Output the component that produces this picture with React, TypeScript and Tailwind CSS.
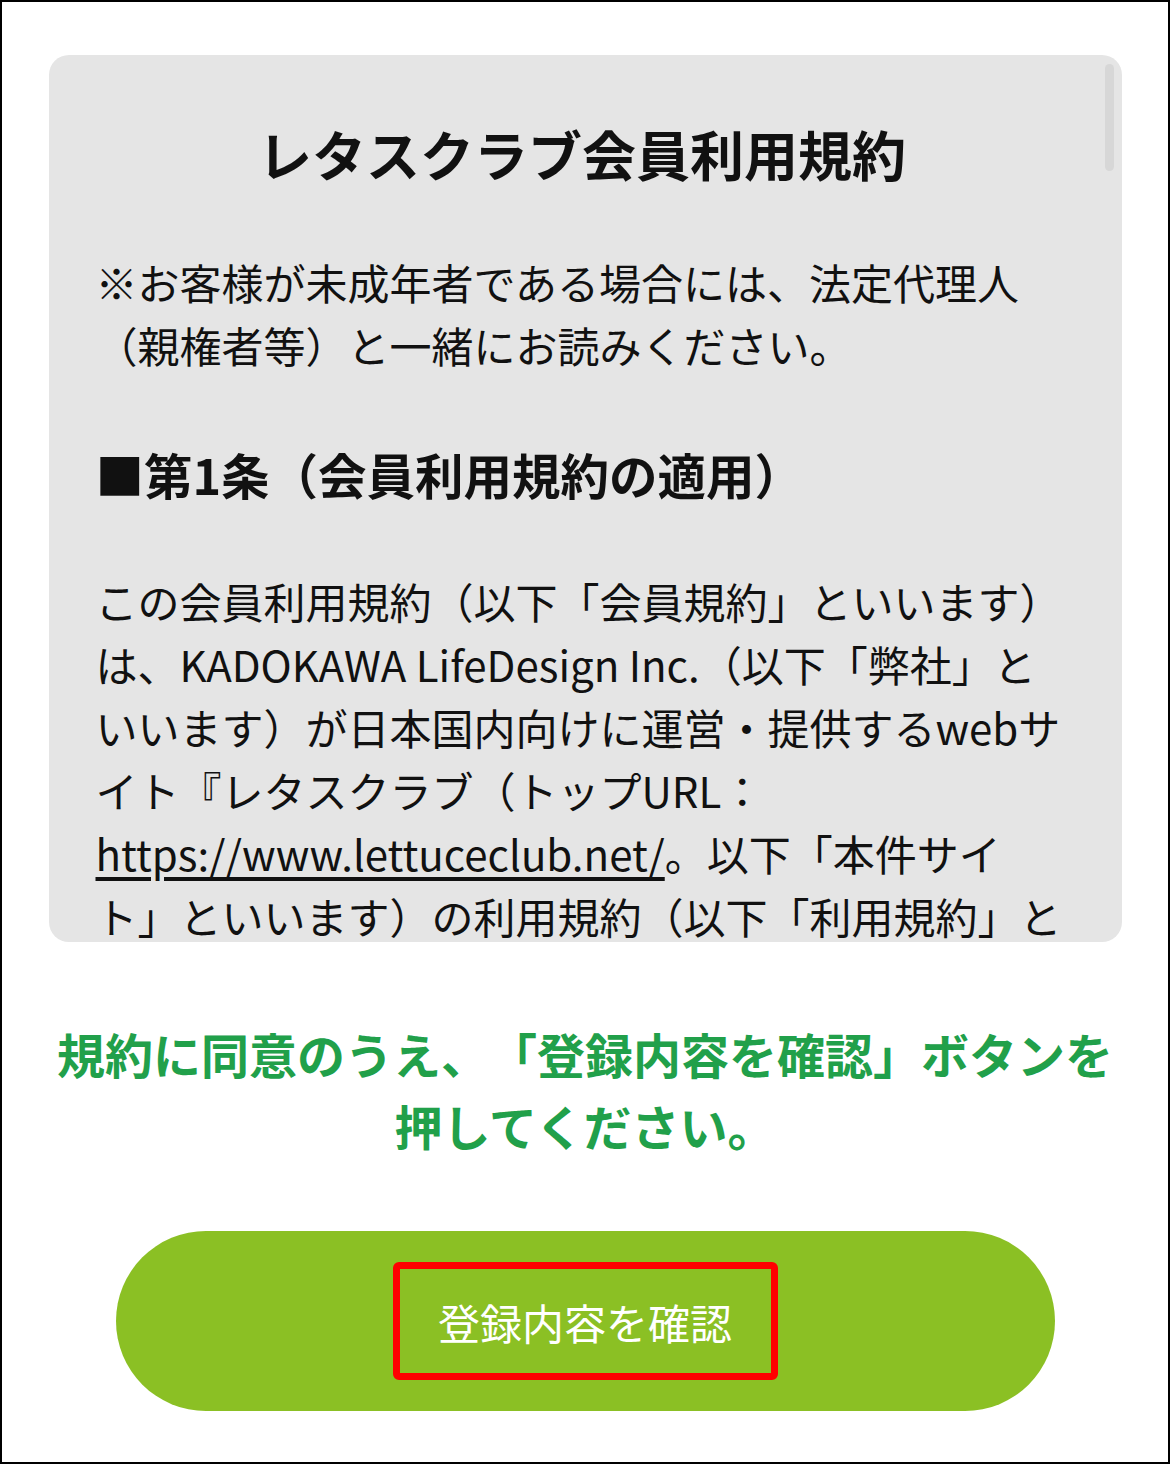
// Lettuce Club member terms: agreement screen

const fontStack = {
  fontFamily: '"Noto Sans CJK JP", "Noto Sans", sans-serif',
};

export default function App() {
  return (
    <div
      className="flex h-[1464px] w-[1170px] flex-col items-center border-2 border-black bg-white [text-spacing-trim:space-all]"
      style={fontStack}
    >
      {/* Terms panel (scroll area) */}
      <div className="relative mt-[53px] h-[887px] w-[1073px] overflow-hidden rounded-[20px] bg-[#e5e5e5]">
        <div className="pl-[47px] pr-[53px] pt-[58px] text-[42px] leading-[63px] text-[#111]">
          <h1 className="text-center text-[54px] font-bold leading-[81px]">
            レタスクラブ会員利用規約
          </h1>
          <p className="mt-[56px]">
            ※お客様が未成年者である場合には、法定代理人（親権者等）と一緒にお読みください。
          </p>
          <h2 className="mt-[62px] text-[48.5px] font-bold leading-[73px]">
            ■第1条（会員利用規約の適用）
          </h2>
          <p className="mt-[58px]">
            この会員利用規約（以下「会員規約」といいます）は、KADOKAWA LifeDesign
            Inc.（以下「弊社」といいます）が日本国内向けに運営・提供するwebサイト『レタスクラブ（トップURL：
            <span className="underline underline-offset-[6px]">https://www.lettuceclub.net/</span>
            。以下「本件サイト」といいます）の利用規約（以下「利用規約」といいます）に付随するものとします。
          </p>
        </div>
        {/* scrollbar thumb */}
        <div className="absolute right-[8px] top-[9px] h-[107px] w-[9px] rounded-full bg-[#d7d7d7]" />
      </div>

      {/* Notice */}
      <p className="mt-[75px] px-[40px] text-center text-[48px] font-bold leading-[72px] text-[#21a04a]">
        規約に同意のうえ、「登録内容を確認」ボタンを押してください。
      </p>

      {/* Confirm button */}
      <button className="mt-[70px] flex h-[180px] w-[939px] items-center justify-center rounded-full bg-[#8bc024]">
        <span className="flex h-[118px] w-[385px] items-center justify-center rounded-[6px] border-[7px] border-[#ff0000] text-[42px] leading-[63px] text-white">
          登録内容を確認
        </span>
      </button>
    </div>
  );
}
